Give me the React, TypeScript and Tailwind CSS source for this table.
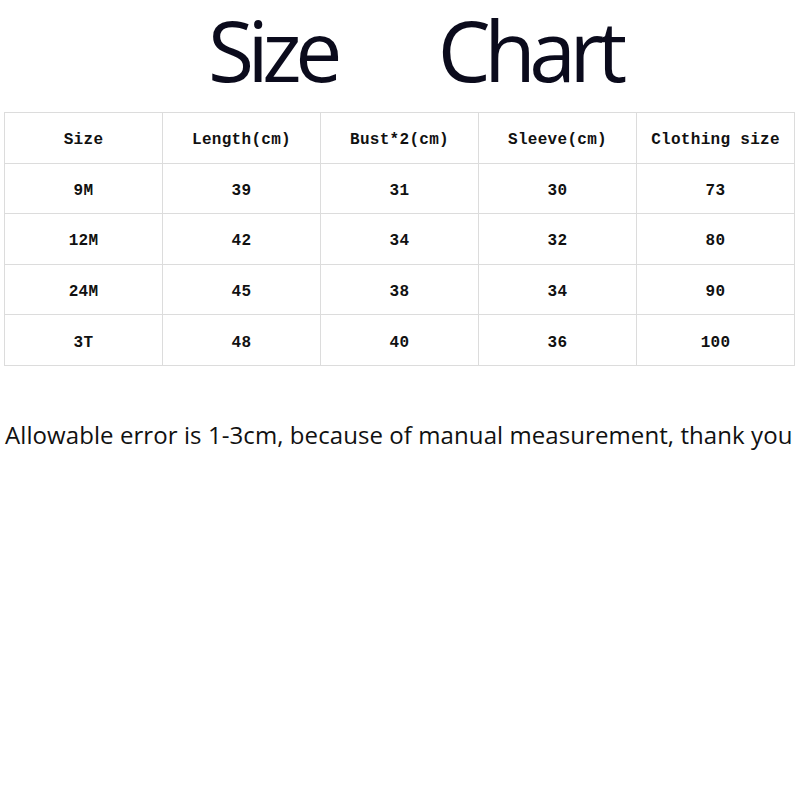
import React from "react";

const headers = ["Size", "Length(cm)", "Bust*2(cm)", "Sleeve(cm)", "Clothing size"];
const rows = [
  ["9M", "39", "31", "30", "73"],
  ["12M", "42", "34", "32", "80"],
  ["24M", "45", "38", "34", "90"],
  ["3T", "48", "40", "36", "100"],
];

export default function App() {
  const all = [headers, ...rows];
  return (
    <div className="w-[800px] h-[800px] bg-white relative overflow-hidden">
      <div
        className="h-[112px] flex items-start text-[#0b0b1c] text-[84px] leading-[1.2] tracking-[-6.5px]"
        style={{ fontFamily: '"Open Sans", sans-serif' }}
      >
        <span className="ml-[208px] pr-[10px]">Size</span>
        <span className="ml-[92px] pr-[10px]">Chart</span>
      </div>
      <div className="ml-[4px] w-[791px] border-l border-t border-[#dcdcdc]">
        {all.map((r, i) => (
          <div key={i} className="grid grid-cols-[158px_158px_158px_158px_158px] h-[50.6px]">
            {r.map((c, j) => (
              <div
                key={j}
                className="border-r border-b border-[#dcdcdc] flex items-center justify-center pt-[5px] text-[16px] text-[#111] font-bold tracking-[0.3px]"
                style={{ fontFamily: '"Liberation Mono", monospace' }}
              >
                {c}
              </div>
            ))}
          </div>
        ))}
      </div>
      <div
        className="mt-[57px] ml-[5px] text-[24px] leading-none text-[#111] whitespace-nowrap tracking-[0.08px]"
        style={{ fontFamily: '"Open Sans", sans-serif' }}
      >
        Allowable error is 1-3cm, because of manual measurement, thank you
      </div>
    </div>
  );
}
